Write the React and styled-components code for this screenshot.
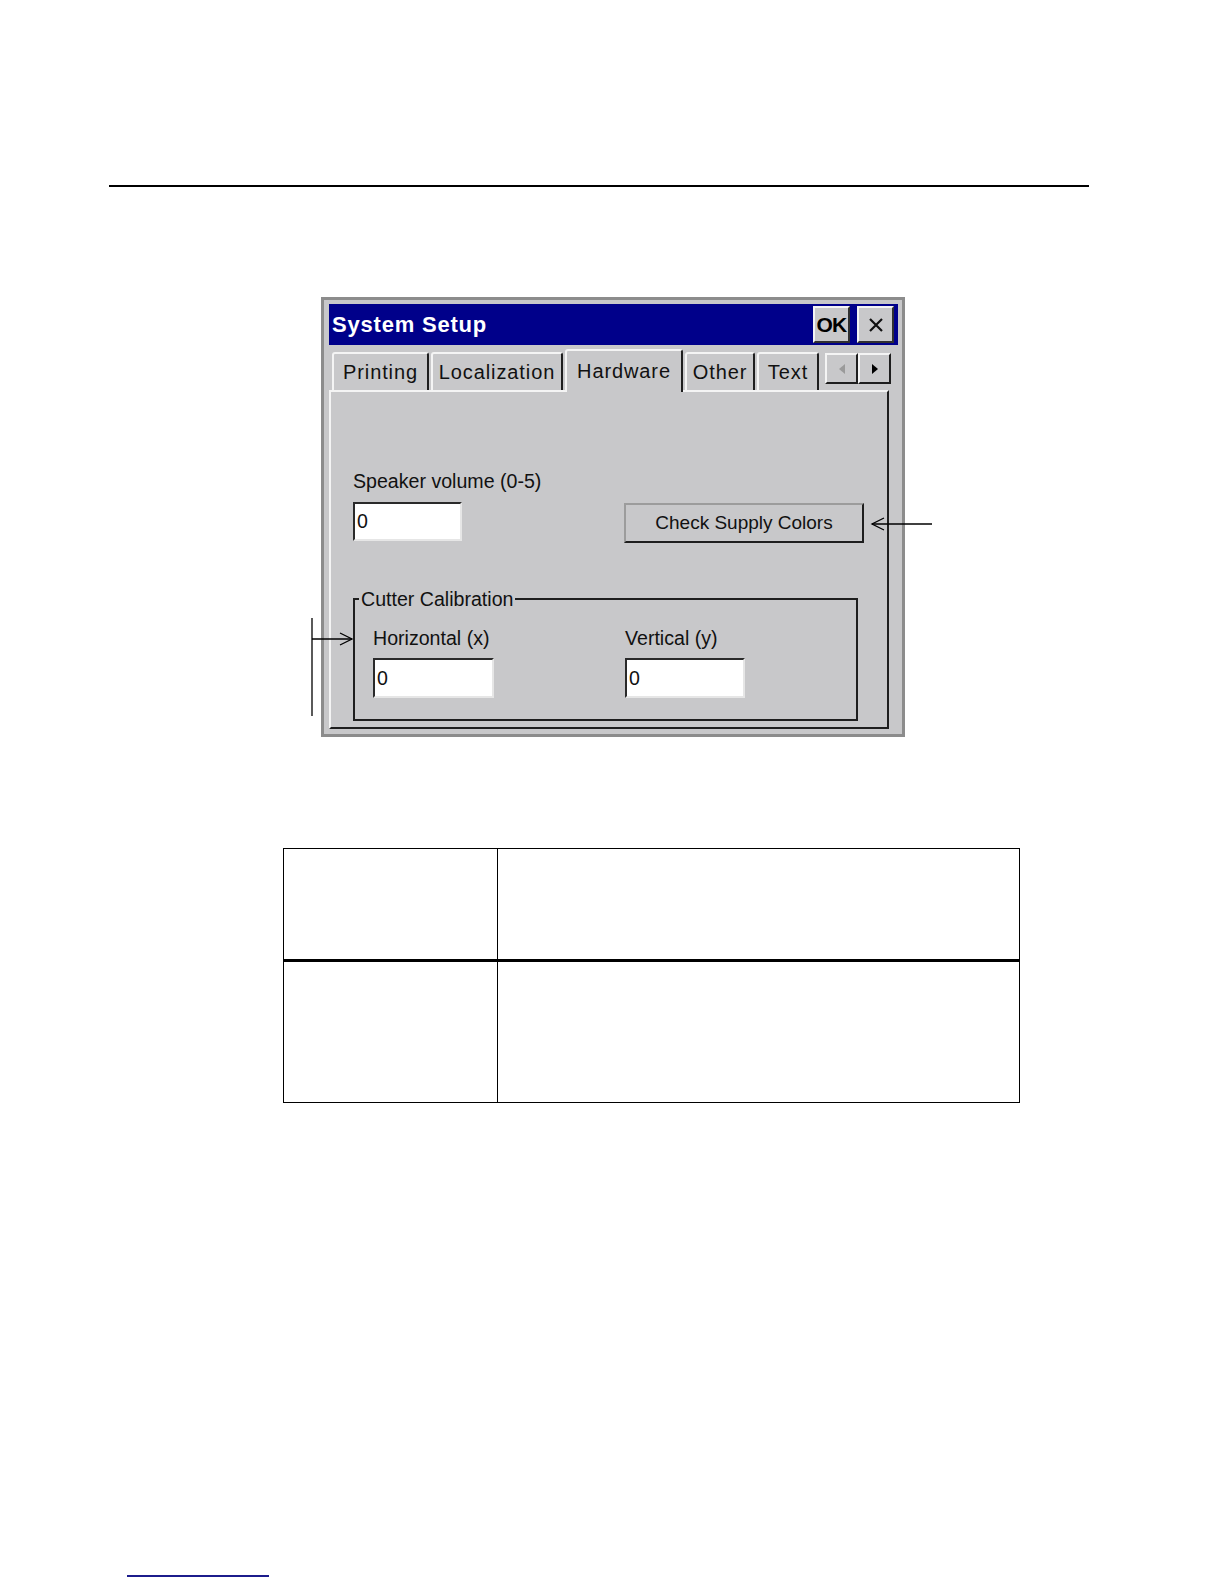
import React from "react";
import styled, { createGlobalStyle } from "styled-components";

const GlobalStyle = createGlobalStyle`
  html, body { margin: 0; padding: 0; background: #fff; }
  body { font-family: "Liberation Sans", Arial, sans-serif; color: #111; }
`;

const GRAY = "#c8c8ca";
const LIGHT = "#f4f4f4";
const DARK = "#1e1e1e";

const Page = styled.div`
  width: 1224px;
  height: 1584px;
  display: flex;
  flex-direction: column;
  overflow: hidden;
  background: #fff;
`;

const Rule = styled.div`
  flex: none;
  margin: 185px 0 0 109px;
  width: 980px;
  height: 2px;
  background: #000;
`;

const Figure = styled.div`
  flex: none;
  position: relative;
  margin-top: 110px;
  height: 440px;
`;

const Callouts = styled.svg`
  position: absolute;
  left: 0;
  top: 0;
  pointer-events: none;
`;

const Dialog = styled.div`
  width: 584px;
  height: 440px;
  box-sizing: border-box;
  margin-left: 321px;
  background: ${GRAY};
  border: 3px solid #8c8c8c;
  padding: 4px 4px 5px 5px;
  display: flex;
  flex-direction: column;
  font-family: "Liberation Sans", Arial, sans-serif;
  color: #111;
`;

const TitleBar = styled.div`
  height: 41px;
  flex: none;
  background: #00008a;
  display: flex;
  align-items: center;
  gap: 7px;
  padding: 0 4px 0 3px;
`;

const Title = styled.div`
  flex: 1;
  color: #fff;
  font-weight: bold;
  font-size: 22px;
  letter-spacing: 0.8px;
  padding-top: 1px;
`;

const CaptionButton = styled.div`
  width: 37px;
  height: 37px;
  box-sizing: border-box;
  background: ${GRAY};
  border: 2px solid;
  border-color: ${LIGHT} #303030 #303030 ${LIGHT};
  display: flex;
  align-items: center;
  justify-content: center;
  font-weight: bold;
  font-size: 21px;
  letter-spacing: -0.8px;
  color: #000;
`;

const TabStrip = styled.div`
  height: 45px;
  flex: none;
  display: flex;
  align-items: flex-end;
  gap: 2px;
  padding-left: 3px;
  box-sizing: border-box;
  position: relative;
  z-index: 1;
`;

const Tab = styled.div`
  width: ${(p) => p.$w}px;
  height: ${(p) => (p.$active ? 43 : 38)}px;
  margin-bottom: ${(p) => (p.$active ? -2 : 0)}px;
  box-sizing: border-box;
  background: ${GRAY};
  border: 2px solid;
  border-bottom: none;
  border-color: ${LIGHT} ${DARK} transparent ${LIGHT};
  border-radius: 3px 3px 0 0;
  display: flex;
  align-items: center;
  justify-content: center;
  font-size: 20px;
  letter-spacing: 0.9px;
`;

const Scroller = styled.div`
  display: flex;
  margin: 0 0 6px 4px;
`;

const ScrollButton = styled.div`
  width: 33px;
  height: 31px;
  box-sizing: border-box;
  border: 2px solid;
  border-color: ${LIGHT} ${DARK} ${DARK} ${LIGHT};
  background: ${GRAY};
  display: flex;
  align-items: center;
  justify-content: center;
`;

const Panel = styled.div`
  flex: 1;
  margin-right: 9px;
  box-sizing: border-box;
  border: 2px solid;
  border-color: ${LIGHT} ${DARK} ${DARK} ${LIGHT};
  padding: 78px 23px 0 22px;
`;

const TopRow = styled.div`
  display: flex;
  justify-content: space-between;
  align-items: flex-end;
`;

const Field = styled.div`
  display: flex;
  flex-direction: column;
  gap: ${(p) => p.$gap}px;
`;

const Label = styled.div`
  font-size: 19.6px;
  line-height: 22px;
  white-space: nowrap;
`;

const TextBox = styled.div`
  width: ${(p) => p.$w}px;
  height: ${(p) => p.$h}px;
  box-sizing: border-box;
  background: #fff;
  border: 2px solid;
  border-color: #2a2a2a #e6e6e6 #e6e6e6 #2a2a2a;
  font-size: 19.6px;
  display: flex;
  align-items: center;
  padding-left: 2px;
`;

const PushButton = styled.div`
  width: 240px;
  height: 40px;
  margin-bottom: -2px;
  box-sizing: border-box;
  background: ${GRAY};
  border: 2px solid;
  border-color: #9c9c9c ${DARK} ${DARK} #9c9c9c;
  display: flex;
  align-items: center;
  justify-content: center;
  font-size: 19px;
`;

const Group = styled.fieldset`
  margin: 47px 0 0 0;
  padding: 0 0 21px 4px;
  width: 505px;
  box-sizing: border-box;
  border: 2px solid ${DARK};
  min-width: 0;
`;

const Legend = styled.legend`
  padding: 0 2px;
  font-size: 19.6px;
  line-height: 22px;
`;

const GroupGrid = styled.div`
  display: grid;
  grid-template-columns: 252px 1fr;
  margin: 17px 0 0 14px;
`;

const Table = styled.table`
  flex: none;
  margin: 111px 0 0 283px;
  width: 737px;
  border-collapse: collapse;
`;

const Cell = styled.td`
  border: 1.5px solid #000;
  border-bottom-width: ${(p) => (p.$thick ? 3 : 1.5)}px;
  width: ${(p) => (p.$first ? "213px" : "auto")};
  height: ${(p) => p.$h}px;
  padding: 0;
`;

const FooterLink = styled.div`
  flex: none;
  margin: 472px 0 0 127px;
  width: 142px;
  height: 2px;
  background: #1c1c8c;
`;

const CloseIcon = () => (
  <svg width="16" height="16" viewBox="0 0 16 16">
    <path d="M2 2 L14 14 M14 2 L2 14" stroke="#111" strokeWidth="2.2" />
  </svg>
);

const Triangle = ({ dir, color }) => (
  <svg width="8" height="12" viewBox="0 0 8 12">
    {dir === "left" ? (
      <polygon points="7,1 1,6 7,11" fill={color} />
    ) : (
      <polygon points="1,1 7,6 1,11" fill={color} />
    )}
  </svg>
);

export default function App() {
  return (
    <>
      <GlobalStyle />
      <Page>
        <Rule />
        <Figure>
          <Dialog>
            <TitleBar>
              <Title>System Setup</Title>
              <CaptionButton>OK</CaptionButton>
              <CaptionButton>
                <CloseIcon />
              </CaptionButton>
            </TitleBar>
            <TabStrip>
              <Tab $w={97}>Printing</Tab>
              <Tab $w={132}>Localization</Tab>
              <Tab $w={118} $active>
                Hardware
              </Tab>
              <Tab $w={70}>Other</Tab>
              <Tab $w={62}>Text</Tab>
              <Scroller>
                <ScrollButton>
                  <Triangle dir="left" color="#9a9a9a" />
                </ScrollButton>
                <ScrollButton>
                  <Triangle dir="right" color="#000" />
                </ScrollButton>
              </Scroller>
            </TabStrip>
            <Panel>
              <TopRow>
                <Field $gap={10}>
                  <Label>Speaker volume (0-5)</Label>
                  <TextBox $w={109} $h={39}>0</TextBox>
                </Field>
                <PushButton>Check Supply Colors</PushButton>
              </TopRow>
              <Group>
                <Legend>Cutter Calibration</Legend>
                <GroupGrid>
                  <Field $gap={9}>
                    <Label>Horizontal (x)</Label>
                    <TextBox $w={121} $h={40}>0</TextBox>
                  </Field>
                  <Field $gap={9}>
                    <Label>Vertical (y)</Label>
                    <TextBox $w={120} $h={40}>0</TextBox>
                  </Field>
                </GroupGrid>
              </Group>
            </Panel>
          </Dialog>
          <Callouts width="1224" height="440" viewBox="0 0 1224 440">
            <g stroke="#000" strokeWidth="1.3" fill="none">
              <line x1="872" y1="227" x2="932" y2="227" />
              <polyline points="884,221 872,227 884,233" />
              <line x1="312" y1="321" x2="312" y2="419" />
              <line x1="312" y1="342" x2="352" y2="342" />
              <polyline points="340,336 352,342 340,348" />
            </g>
          </Callouts>
        </Figure>
        <Table>
          <tbody>
            <tr>
              <Cell $first $thick $h={110} />
              <Cell $thick />
            </tr>
            <tr>
              <Cell $first $h={140} />
              <Cell />
            </tr>
          </tbody>
        </Table>
        <FooterLink />
      </Page>
    </>
  );
}
